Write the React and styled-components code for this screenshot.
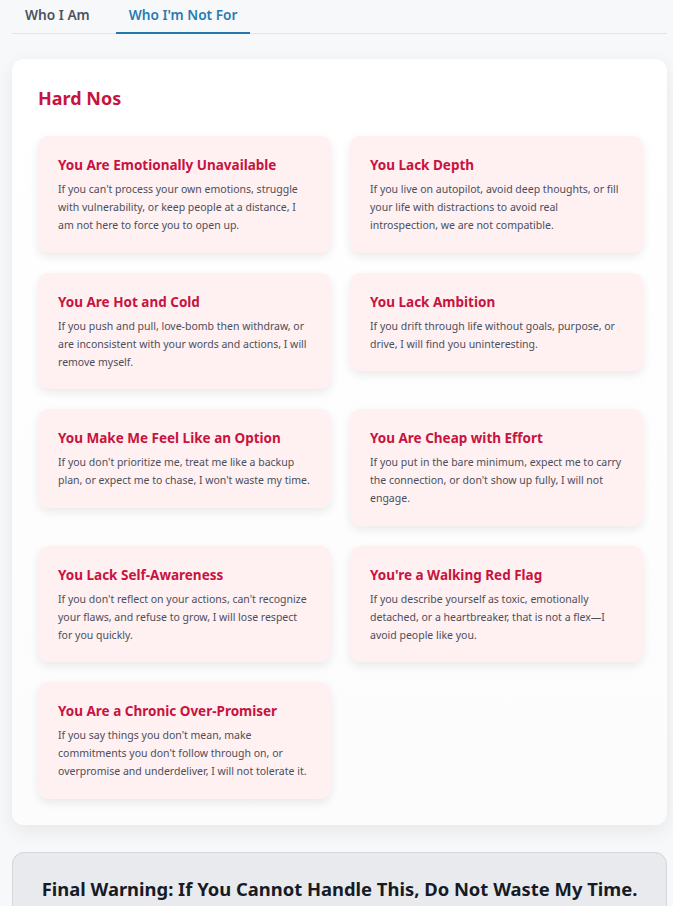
import React from "react"
import styled, { createGlobalStyle } from "styled-components"

const GlobalStyle = createGlobalStyle`
  html, body {
    margin: 0;
    padding: 0;
    background: #f7f8fa;
  }
  body {
    font-family: "Noto Sans", "Open Sans", sans-serif;
  }
`

const Page = styled.div`
  padding: 0 6px 0 12px;
`

const TabBar = styled.nav`
  display: flex;
  border-bottom: 1px solid #e3e5e9;
`

const Tab = styled.button`
  appearance: none;
  background: none;
  border: none;
  margin: 0 13px -1px 0;
  padding: 5px 13px 8px;
  font-family: inherit;
  font-size: 13.7px;
  font-weight: 600;
  color: ${p => (p.$active ? "#2b7bb0" : "#4b5360")};
  border-bottom: 2px solid ${p => (p.$active ? "#2677ad" : "transparent")};
  cursor: pointer;
`

const Panel = styled.section`
  margin-top: 25px;
  background: linear-gradient(180deg, #ffffff 0%, #fcfcfd 100%);
  border-radius: 12px;
  box-shadow: 0 6px 20px rgba(0, 0, 0, 0.07);
  padding: 27px 24px 26px 26px;
`

const Heading = styled.h2`
  margin: 0 0 26px;
  font-size: 18px;
  line-height: 24px;
  font-weight: 700;
  color: #c8133f;
`

const Grid = styled.div`
  display: grid;
  grid-template-columns: 1fr 1fr;
  column-gap: 19px;
  row-gap: 20px;
  align-items: start;
`

const Item = styled.article`
  background: #fff0f1;
  border-radius: 10px;
  padding: 20px 20px 18.5px;
  box-shadow: 0 4px 10px rgba(0, 0, 0, 0.08);
`

const ItemTitle = styled.h3`
  margin: 0 0 5px;
  font-size: 13.5px;
  line-height: 19px;
  font-weight: 700;
  color: #c8133f;
`

const ItemText = styled.p`
  margin: 0;
  font-size: 10.5px;
  line-height: 18px;
  color: #4a4f5c;
`

const Warning = styled.section`
  margin-top: 27px;
  background: #e9eaed;
  border: 1px solid #d3d6db;
  border-radius: 12px;
  padding: 23px 20px;
  text-align: center;
`

const WarningTitle = styled.h2`
  margin: 0;
  font-size: 18.4px;
  font-weight: 700;
  color: #161b26;
`

const items = [
  {
    title: "You Are Emotionally Unavailable",
    text: "If you can't process your own emotions, struggle with vulnerability, or keep people at a distance, I am not here to force you to open up.",
  },
  {
    title: "You Lack Depth",
    text: "If you live on autopilot, avoid deep thoughts, or fill your life with distractions to avoid real introspection, we are not compatible.",
  },
  {
    title: "You Are Hot and Cold",
    text: "If you push and pull, love-bomb then withdraw, or are inconsistent with your words and actions, I will remove myself.",
  },
  {
    title: "You Lack Ambition",
    text: "If you drift through life without goals, purpose, or drive, I will find you uninteresting.",
  },
  {
    title: "You Make Me Feel Like an Option",
    text: "If you don't prioritize me, treat me like a backup plan, or expect me to chase, I won't waste my time.",
  },
  {
    title: "You Are Cheap with Effort",
    text: "If you put in the bare minimum, expect me to carry the connection, or don't show up fully, I will not engage.",
  },
  {
    title: "You Lack Self-Awareness",
    text: "If you don't reflect on your actions, can't recognize your flaws, and refuse to grow, I will lose respect for you quickly.",
  },
  {
    title: "You're a Walking Red Flag",
    text: "If you describe yourself as toxic, emotionally detached, or a heartbreaker, that is not a flex\u2014I avoid people like you.",
  },
  {
    title: "You Are a Chronic Over-Promiser",
    text: "If you say things you don't mean, make commitments you don't follow through on, or overpromise and underdeliver, I will not tolerate it.",
  },
]

export default function App() {
  return (
    <Page>
      <GlobalStyle />
      <TabBar>
        <Tab>Who I Am</Tab>
        <Tab $active>Who I'm Not For</Tab>
      </TabBar>
      <Panel>
        <Heading>Hard Nos</Heading>
        <Grid>
          {items.map(item => (
            <Item key={item.title}>
              <ItemTitle>{item.title}</ItemTitle>
              <ItemText>{item.text}</ItemText>
            </Item>
          ))}
        </Grid>
      </Panel>
      <Warning>
        <WarningTitle>Final Warning: If You Cannot Handle This, Do Not Waste My Time.</WarningTitle>
      </Warning>
    </Page>
  )
}
